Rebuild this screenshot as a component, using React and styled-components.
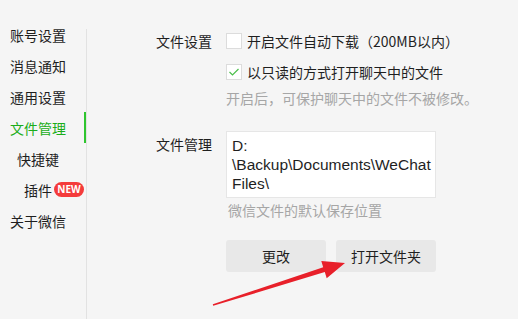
import React from 'react';
import styled, { createGlobalStyle } from 'styled-components';

const GlobalStyle = createGlobalStyle`
    html, body {
        margin: 0;
        padding: 0;
        background: #f5f5f5;
    }
    body {
        font-family: "Noto Sans CJK SC", "Noto Sans", sans-serif;
        color: #1f1f1f;
    }
`

const Page = styled.div`
    position: relative;
    display: flex;
    width: 518px;
    height: 319px;
    overflow: hidden;
    background: #f5f5f5;
`

const SideBar = styled.div`
    position: relative;
    width: 87px;
    padding-top: 19px;
    box-sizing: border-box;
    display: flex;
    flex-direction: column;

    &::after {
        content: '';
        position: absolute;
        top: 29px;
        bottom: 0;
        right: 0;
        width: 1px;
        background: #e2e2e2;
    }
`

const NavItem = styled.div`
    display: flex;
    align-items: center;
    width: 86px;
    height: 31px;
    box-sizing: border-box;
    padding-left: ${p => p.$indent || 10}px;
    font-size: 14px;
    color: ${p => p.$active ? '#1aad19' : '#1f1f1f'};
    box-shadow: ${p => p.$active ? 'inset -2px 0 0 #2ec52e' : 'none'};
`

const Badge = styled.span`
    margin-left: 2px;
    width: 30px;
    height: 15px;
    border-radius: 8px;
    background: #f43b3b;
    color: #fff;
    font-family: "Noto Sans", sans-serif;
    font-size: 10px;
    font-weight: 700;
    line-height: 15px;
    text-align: center;
`

const Main = styled.div`
    flex: 1;
    padding: 33px 0 0 69px;
    display: flex;
    flex-direction: column;
`

const Section = styled.div`
    display: grid;
    grid-template-columns: 70px 1fr;
    margin-top: ${p => p.$top || 0}px;
`

const Label = styled.div`
    font-size: 14px;
    line-height: ${p => p.$lh || 16}px;
    padding-top: ${p => p.$pt || 0}px;
`

const Content = styled.div`
    display: flex;
    flex-direction: column;
`

const Option = styled.div`
    display: flex;
    align-items: center;
    gap: 5px;
    height: 16px;
    font-size: 14px;
    margin-top: ${p => p.$top || 0}px;
`

const CheckBox = styled.span`
    width: 16px;
    height: 16px;
    box-sizing: border-box;
    border: 1px solid #dcdcdc;
    background: #fff;
    display: flex;
    align-items: center;
    justify-content: center;
`

const Hint = styled.div`
    font-size: 14px;
    line-height: 20px;
    color: #a6a6a6;
    margin-top: ${p => p.$top || 0}px;
    margin-left: ${p => p.$left || 0}px;
`

const PathBox = styled.div`
    width: 210px;
    height: 67px;
    box-sizing: border-box;
    padding: 4px 5px;
    background: #fff;
    border: 1px solid #e6e6e6;
    font-family: "Liberation Sans", Arial, sans-serif;
    font-size: 15.5px;
    line-height: 19px;
    white-space: nowrap;
`

const ButtonRow = styled.div`
    display: flex;
    gap: 10px;
    margin-top: 20px;
`

const Button = styled.button`
    width: 100px;
    height: 32px;
    border: none;
    border-radius: 3px;
    background: #e8e8e8;
    color: #1f1f1f;
    font-family: "Noto Sans CJK SC", sans-serif;
    font-size: 14px;
    padding: 0;
`

const Arrow = styled.svg`
    position: absolute;
    left: 0;
    top: 0;
    pointer-events: none;
`

const navItems = [
    { text: '账号设置' },
    { text: '消息通知' },
    { text: '通用设置' },
    { text: '文件管理', active: true },
    { text: '快捷键', indent: 17 },
    { text: '插件', indent: 24, badge: true },
    { text: '关于微信' },
]

export default function App() {
    return (
        <Page>
            <GlobalStyle />
            <SideBar>
                {navItems.map(item => (
                    <NavItem key={item.text} $active={item.active} $indent={item.indent}>
                        {item.text}
                        {item.badge && <Badge>NEW</Badge>}
                    </NavItem>
                ))}
            </SideBar>
            <Main>
                <Section>
                    <Label>文件设置</Label>
                    <Content>
                        <Option>
                            <CheckBox />
                            开启文件自动下载（200MB以内）
                        </Option>
                        <Option $top={15}>
                            <CheckBox>
                                <svg width="12" height="10" viewBox="0 0 12 10">
                                    <polyline points="1.5,5 4.5,8 10.5,2" fill="none" stroke="#4cbf4c" strokeWidth="1.2" />
                                </svg>
                            </CheckBox>
                            以只读的方式打开聊天中的文件
                        </Option>
                        <Hint $top={8}>开启后，可保护聊天中的文件不被修改。</Hint>
                    </Content>
                </Section>
                <Section $top={23}>
                    <Label $lh={20} $pt={3}>文件管理</Label>
                    <Content>
                        <PathBox>
                            D:<br />
                            \Backup\Documents\WeChat<br />
                            Files\
                        </PathBox>
                        <Hint $top={2} $left={2}>微信文件的默认保存位置</Hint>
                        <ButtonRow>
                            <Button>更改</Button>
                            <Button>打开文件夹</Button>
                        </ButtonRow>
                    </Content>
                </Section>
            </Main>
            <Arrow width="518" height="319" viewBox="0 0 518 319">
                <polygon
                    points="212.8,304.2 323.2,267.3 321.3,261.1 345,263 326.7,278.3 324.8,272.1 213.2,305.8"
                    fill="#e8202a"
                />
            </Arrow>
        </Page>
    );
}
